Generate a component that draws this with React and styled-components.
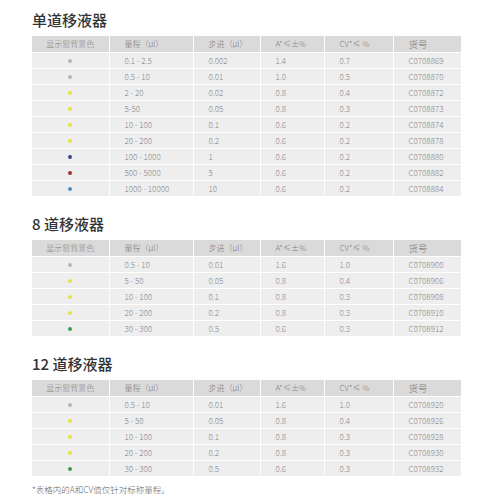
import React from 'react';
import styled, { createGlobalStyle } from 'styled-components';

const Global = createGlobalStyle`
    body{
        margin:0;
        background:#fff;
        font-family:"Noto Sans CJK SC","Noto Sans",sans-serif;
    }
`

const Page = styled.div`
    width:500px;
    padding:10px 0 0 32px;
    box-sizing:border-box;
`

const Section = styled.section`
    margin-bottom:18px;
`

const Title = styled.h2`
    margin:0 0 6px;
    font-size:15px;
    line-height:20px;
    font-weight:500;
    color:#333;
`

const Table = styled.table`
    width:429px;
    table-layout:fixed;
    border-collapse:collapse;
    font-size:8px;
    line-height:10px;
    font-weight:300;
    color:#858585;
    th,td{
        border:1px solid #fff;
        padding:0 0 0 15px;
        text-align:left;
        white-space:nowrap;
    }
    th{
        height:16px;
        background:#dadada;
        font-weight:300;
        color:#7c7c7c;
    }
    td{
        height:15px;
        background:#eeeeee;
    }
    tr > :first-child{
        padding:0;
        text-align:center;
        border-left:none;
    }
    tr > :last-child{
        border-right:none;
    }
    tbody tr:last-child td{
        border-bottom:none;
    }
    thead th{
        border-top:none;
    }
`

const Big = styled.th`
    && {
        font-size:9.5px;
        color:#777;
    }
`

const Dot = styled.span`
    display:inline-block;
    width:4px;
    height:4px;
    border-radius:50%;
    vertical-align:middle;
    background:${p => p.$c};
`

const Note = styled.p`
    margin:-12px 0 0;
    font-size:8.5px;
    line-height:14px;
    font-weight:300;
    color:#666;
`

const C = {
    gray:'#b4b4b4',
    yellow:'#e6e345',
    navy:'#3b4a86',
    red:'#a3302c',
    blue:'#4f8cc9',
    green:'#3e9a4c',
}

const single = [
    ['gray','0.1 - 2.5','0.002','1.4','0.7','C0708869'],
    ['gray','0.5 - 10','0.01','1.0','0.5','C0708870'],
    ['yellow','2 - 20','0.02','0.8','0.4','C0708872'],
    ['yellow','5-50','0.05','0.8','0.3','C0708873'],
    ['yellow','10 - 100','0.1','0.6','0.2','C0708874'],
    ['yellow','20 - 200','0.2','0.6','0.2','C0708878'],
    ['navy','100 - 1000','1','0.6','0.2','C0708880'],
    ['red','500 - 5000','5','0.6','0.2','C0708882'],
    ['blue','1000 - 10000','10','0.6','0.2','C0708884'],
]

const eight = [
    ['gray','0.5 - 10','0.01','1.6','1.0','C0708900'],
    ['yellow','5 - 50','0.05','0.8','0.4','C0708906'],
    ['yellow','10 - 100','0.1','0.8','0.3','C0708908'],
    ['yellow','20 - 200','0.2','0.8','0.3','C0708910'],
    ['green','30 - 300','0.5','0.6','0.3','C0708912'],
]

const twelve = [
    ['gray','0.5 - 10','0.01','1.6','1.0','C0708920'],
    ['yellow','5 - 50','0.05','0.8','0.4','C0708926'],
    ['yellow','10 - 100','0.1','0.8','0.3','C0708928'],
    ['yellow','20 - 200','0.2','0.8','0.3','C0708930'],
    ['green','30 - 300','0.5','0.6','0.3','C0708932'],
]

const widths = [77, 84, 67, 64, 69, 68]

const SpecTable = ({title, rows}) => (
    <Section>
        <Title>{title}</Title>
        <Table>
            <colgroup>
                {widths.map((w, i) => <col key={i} style={{width:w}}/>)}
            </colgroup>
            <thead>
                <tr>
                    <th>显示窗背景色</th>
                    <th>量程（μl）</th>
                    <th>步进（μl）</th>
                    <th>A*≤±%</th>
                    <th>CV*≤ %</th>
                    <Big>货号</Big>
                </tr>
            </thead>
            <tbody>
                {rows.map(([c, ...cells]) => (
                    <tr key={cells[4]}>
                        <td><Dot $c={C[c]}/></td>
                        {cells.map((v, i) => <td key={i}>{v}</td>)}
                    </tr>
                ))}
            </tbody>
        </Table>
    </Section>
)

const App = () => (
    <Page>
        <Global/>
        <SpecTable title="单道移液器" rows={single}/>
        <SpecTable title="8 道移液器" rows={eight}/>
        <SpecTable title="12 道移液器" rows={twelve}/>
        <Note>*表格内的A和CV值仅针对标称量程。</Note>
    </Page>
)

export default App;
